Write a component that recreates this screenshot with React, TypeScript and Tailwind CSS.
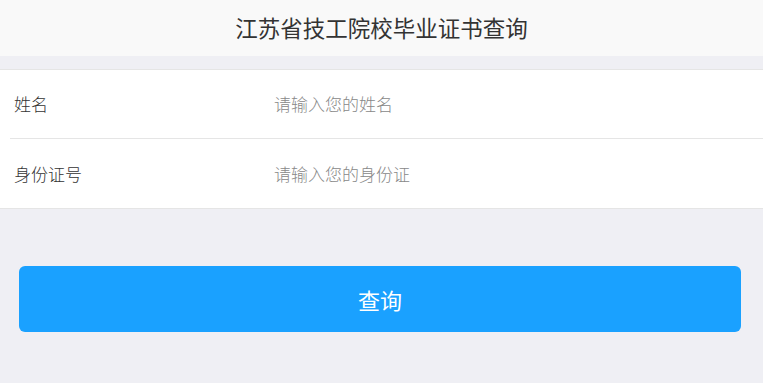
import { useState } from "react";

const font = { fontFamily: '"Noto Sans CJK SC", "Liberation Sans", sans-serif' };

function Field({ label, placeholder, last }: { label: string; placeholder: string; last?: boolean }) {
  const [value, setValue] = useState("");
  return (
    <div className="pl-[10px]">
      <div className={`flex items-center ${last ? "h-[69px]" : "h-[69px] border-b border-[#e5e5e5]"}`}>
        <label className="w-[264px] pl-1 text-[17px] font-light text-[#333]">{label}</label>
        <input
          value={value}
          onChange={(e) => setValue(e.target.value)}
          placeholder={placeholder}
          className="flex-1 bg-transparent text-[17px] font-light text-[#333] outline-none placeholder:text-[#888]"
          style={font}
        />
      </div>
    </div>
  );
}

export default function App() {
  return (
    <div className="min-h-[383px] bg-[#efeff4]" style={font}>
      {/* Header */}
      <div className="flex h-14 items-center justify-center bg-[#f9f9f9]">
        <h1 className="text-[22.5px] text-[#333]">江苏省技工院校毕业证书查询</h1>
      </div>

      {/* Form */}
      <div className="mt-[13px] border-y border-[#e5e5e5] bg-white">
        <Field label="姓名" placeholder="请输入您的姓名" />
        <Field label="身份证号" placeholder="请输入您的身份证" last />
      </div>

      {/* Submit */}
      <div className="pl-[19px] pr-[22px] pt-[57px]">
        <button className="flex h-[66px] w-full items-center justify-center rounded-md bg-[#1aa1ff] text-[22px] text-white">
          查询
        </button>
      </div>
    </div>
  );
}
